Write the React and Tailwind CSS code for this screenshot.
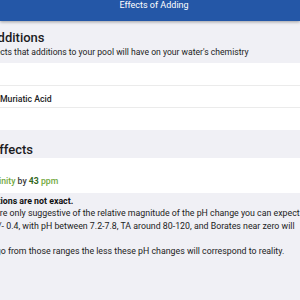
export default function App() {
  return (
    <div className="w-[300px] h-[300px] overflow-hidden bg-[#f0f0f5] text-[#1c1c1e]" style={{ fontFamily: "Roboto, 'Liberation Sans', sans-serif" }}>
      <div className="relative z-10 h-[21px] bg-[#2457a7] shadow-[0_1px_3px_rgba(0,0,0,0.35)] flex items-start justify-center pl-[8px] pt-[1px]">
        <span className="text-[9px] text-white leading-[9px]">Effects of Adding</span>
      </div>
      <div className="h-[42px] bg-[#f0f0f5] flex flex-col pt-[9px]">
        <div className="whitespace-nowrap -ml-[11px] text-[13px] font-medium leading-[16px]">Additions</div>
        <div className="whitespace-nowrap -ml-[15px] text-[8.6px] leading-[13px] text-[#222]">Effects that additions to your pool will have on your water's chemistry</div>
      </div>
      <div className="h-[67px] bg-white pt-[22px]">
        <div className="h-[23px] border-y border-[#ebebeb] flex items-center pt-[5px]">
          <span className="whitespace-nowrap text-[8.7px] font-medium leading-none">Muriatic Acid</span>
        </div>
      </div>
      <div className="h-[28px] bg-[#f0f0f5] pt-[12px]">
        <div className="whitespace-nowrap -ml-[8px] text-[13px] font-medium leading-[16px]">Effects</div>
      </div>
      <div className="h-[35px] bg-white pt-[17px]">
        <div className="whitespace-nowrap -ml-[42px] text-[8.7px] font-medium leading-[13px]">
          <span className="text-[#72a83e]">Total Alkalinity</span> <span className="text-[#3a3a3a]">by</span>{" "}
          <span className="text-[#33691e] font-bold">43</span> <span className="text-[#72a83e]">ppm</span>
        </div>
      </div>
      <div className="bg-[#f0f0f5] pt-[2px] text-[8.8px] leading-[12.4px] text-[#222]">
        <div className="whitespace-nowrap -ml-[28px] font-bold text-[#111]">Predictions are not exact.</div>
        <div className="whitespace-nowrap -ml-[26px]">They are only suggestive of the relative magnitude of the pH change you can expect</div>
        <div className="whitespace-nowrap -ml-[7px]">+/- 0.4, with pH between 7.2-7.8, TA around 80-120, and Borates near zero will</div>
        <div className="h-[12.4px]"></div>
        <div className="whitespace-nowrap -ml-[66px]">The further you go from those ranges the less these pH changes will correspond to reality.</div>
      </div>
    </div>
  );
}
